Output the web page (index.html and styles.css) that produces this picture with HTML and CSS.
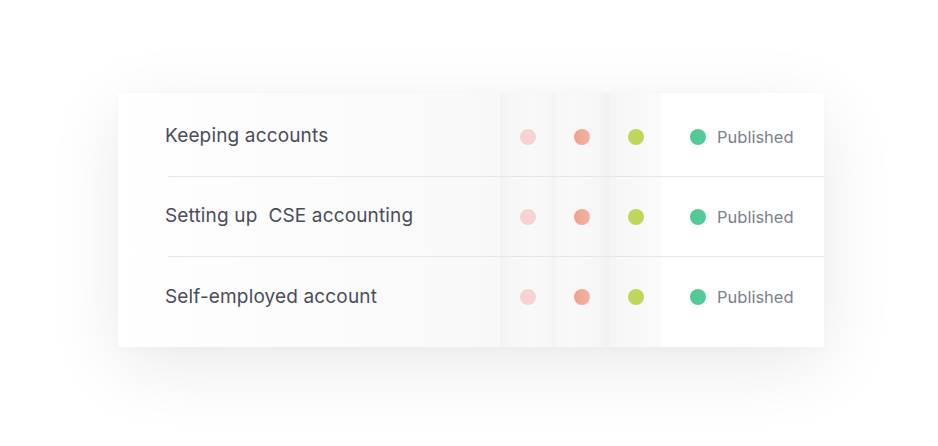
FILE: index.html
```html
<!DOCTYPE html>
<html>
<head>
<meta charset="utf-8">
<link rel="stylesheet" href="styles.css">
</head>
<body>
<div class="stage">
  <div class="card">
    <div class="row">
      <div class="title">Keeping accounts</div>
      <div class="cell c1"><span class="dot pink"></span></div>
      <div class="cell c2"><span class="dot salmon"></span></div>
      <div class="cell c3"><span class="dot lime"></span></div>
      <div class="status"><span class="dot green"></span><span class="label">Published</span></div>
    </div>
    <div class="row">
      <div class="title">Setting up&nbsp; CSE accounting</div>
      <div class="cell c1"><span class="dot pink"></span></div>
      <div class="cell c2"><span class="dot salmon"></span></div>
      <div class="cell c3"><span class="dot lime"></span></div>
      <div class="status"><span class="dot green"></span><span class="label">Published</span></div>
    </div>
    <div class="row last">
      <div class="title">Self-employed account</div>
      <div class="cell c1"><span class="dot pink"></span></div>
      <div class="cell c2"><span class="dot salmon"></span></div>
      <div class="cell c3"><span class="dot lime"></span></div>
      <div class="status"><span class="dot green"></span><span class="label">Published</span></div>
    </div>
  </div>
</div>
</body>
</html>
```

FILE: styles.css
```css
html, body {
  margin: 0;
  padding: 0;
  background: #ffffff;
}
body {
  width: 938px;
  height: 446px;
  overflow: hidden;
  font-family: Inter, "Noto Sans", sans-serif;
}
.stage {
  padding: 93px 0 0 118px;
}
.card {
  width: 706px;
  height: 254px;
  box-sizing: border-box;
  padding: 4px 0 11px 50px;
  border-radius: 2px;
  box-shadow: 0 18px 75px rgba(0, 0, 0, 0.09), 0 2px 10px rgba(0, 0, 0, 0.02);
  background:
    linear-gradient(90deg, #f3f3f3 0, #f6f6f6 8px, #f9f9f9 30px, #f7f7f7 50px, #f2f2f2 55px) 382px 0 / 55px 100% no-repeat,
    linear-gradient(90deg, #f7f7f7 0, #f9f9f9 20px, #f6f6f6 44px, #f1f1f1 54px) 437px 0 / 54px 100% no-repeat,
    linear-gradient(90deg, #f4f4f4 0, #f7f7f7 10px, #f9f9f9 35px, #fbfbfb 53px) 491px 0 / 53px 100% no-repeat,
    linear-gradient(#ffffff, #ffffff) 544px 0 / 162px 100% no-repeat,
    linear-gradient(90deg, #ffffff 0, #fcfcfc 150px, #fafafa 300px, #f8f8f8 382px) 0 0 / 382px 100% no-repeat;
}
.row {
  display: flex;
  align-items: center;
  height: 79px;
  border-bottom: 1px solid #e6e6e6;
}
.row.last {
  border-bottom: none;
  height: 80px;
}
.title {
  width: 335px;
  margin-left: -3px;
  margin-top: -2px;
  font-size: 19px;
  letter-spacing: 0.15px;
  color: #4b4d59;
}
.cell {
  display: flex;
  justify-content: center;
  align-items: center;
}
.c1 { width: 55px; }
.c2 { width: 54px; }
.c3 { width: 53px; }
.status {
  display: flex;
  align-items: center;
  padding-left: 28px;
}
.dot {
  display: block;
  width: 16px;
  height: 16px;
  border-radius: 50%;
}
.pink { background: #f6d2d1; }
.salmon { background: linear-gradient(90deg, #f0a08c, #f3b5a2); }
.lime { background: #bdd75a; }
.green { background: #53c995; }
.label {
  margin-left: 11px;
  font-size: 16.5px;
  color: #7c818b;
}
```
